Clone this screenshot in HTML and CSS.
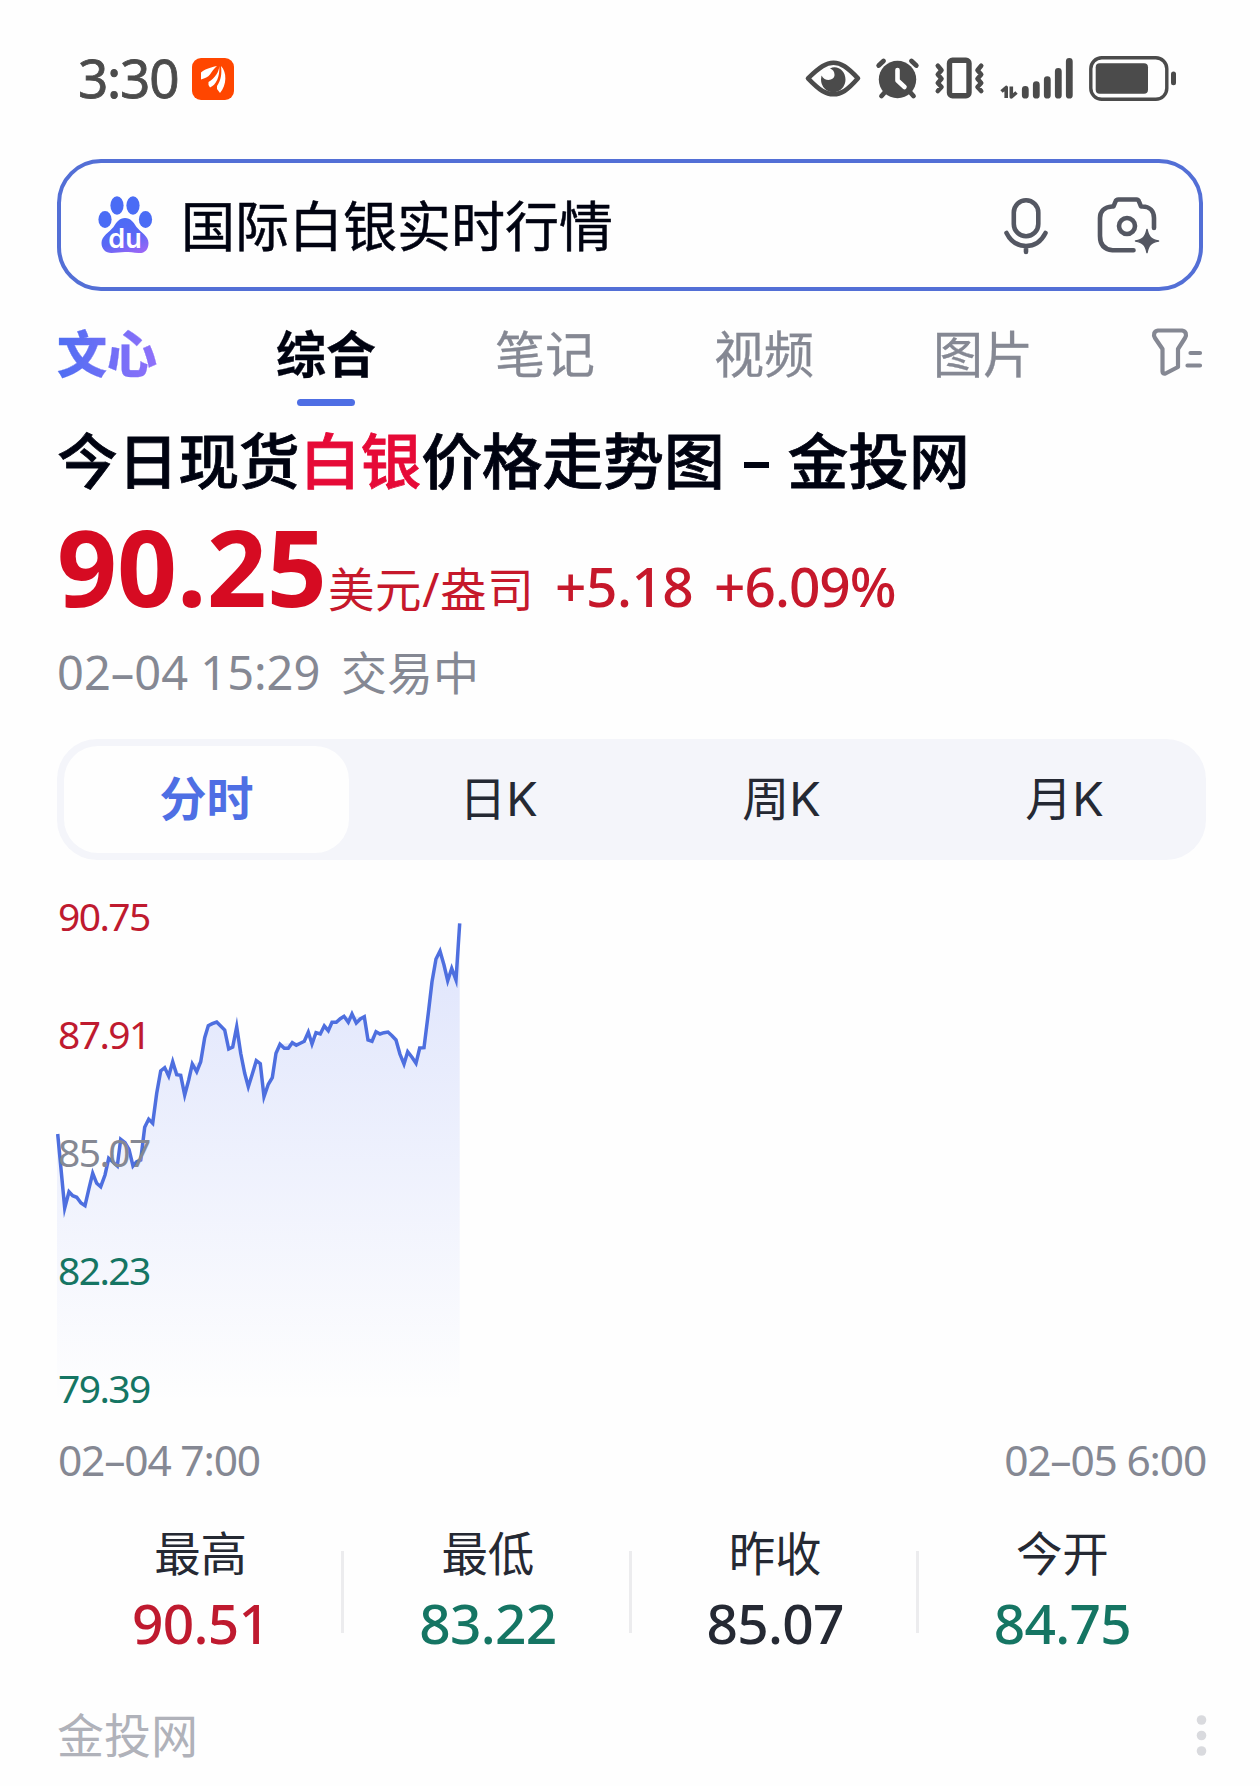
FILE: index.html
```html
<!DOCTYPE html>
<html lang="zh-CN">
<head>
<meta charset="utf-8">
<title>国际白银实时行情</title>
<link rel="stylesheet" href="styles.css">
</head>
<body>
<header class="status">
  <span class="clock num">3:30</span>
  <svg class="app-icon" width="42" height="42" viewBox="0 0 42 42">
    <rect width="42" height="42" rx="9" fill="#ff4600"/>
    <g fill="#fff">
      <path d="M25 8C18 9.500 12 11.500 9 14.500V21.500C13 20 16 19 18 16.500C20 13.500 22 10.500 25 8Z"/>
      <path d="M27.300 8C27 14 23 20 16.500 24V27L18 29.500C24 27 28 19 27.300 8Z"/>
      <path d="M29 8C30 16 29 22 25 28V31L28 35C35 27 35 14 29 8Z"/>
    </g>
  </svg>
  <svg class="status-icons" width="390" height="60" viewBox="0 0 390 60" fill="none" stroke="#4b4b4b" stroke-linecap="round" stroke-linejoin="round">
    <g transform="translate(10 1.500)">
      <path d="M8 27.800C20 16.300 26 12.300 33.500 12.300S47 16.300 58 27.800C47 40.300 41 43.800 33.500 43.800S20 40.300 8 27.800Z" stroke-width="4.600"/>
      <path d="M30 18C37 14 45.500 20 45.500 29A12 12.500 0 0 1 21 29L21.500 25C25 32 35 30 34.500 24C34.400 21 33 19 30 18Z" fill="#4b4b4b" stroke="none"/>
    </g>
    <circle cx="107.500" cy="30.500" r="18.700" fill="#4b4b4b" stroke="none"/>
    <path d="M88.700 16.500L93.500 12M126.300 16.500L121.500 12M96 42L91.500 47M119 42L123.500 47" stroke-width="4.800"/>
    <path d="M107.500 21V31.500L114.500 38" stroke="#fff" stroke-width="4.600"/>
    <rect x="159.500" y="11.300" width="19.500" height="35.500" rx="3" stroke-width="5.400"/>
    <path d="M147.800 16.800L151.500 21.300L147.800 25.500L151.500 29.700L147.800 34L151.500 38L147.800 42M191.200 16.800L187.500 21.300L191.200 25.500L187.500 29.700L191.200 34L187.500 38L191.200 42" stroke-width="4.600"/>
    <path d="M211.500 42.500L216.200 38.500V49M221.300 37.500V48L226.500 43.500" stroke-width="3.600" stroke-linecap="butt"/>
    <path d="M235.300 40.500V46.200M246.300 35.700V46.200M257.300 30.700V46.200M268.300 22.400V46.200M279.300 12.400V46.200" stroke-width="6.800"/>
    <rect x="300.800" y="8.800" width="76" height="41.500" rx="11" stroke-width="3.400"/>
    <rect x="305.700" y="14.300" width="52.300" height="30.500" rx="4" fill="#4b4b4b" stroke="none"/>
    <path d="M383.500 25V33.700" stroke-width="5"/>
  </svg>
</header>

<div class="search">
  <svg class="paw" width="56" height="58" viewBox="0 0 56 58">
    <defs><linearGradient id="paw" x1=".3" y1="0" x2=".8" y2="1"><stop offset="0" stop-color="#4a6cf5"/><stop offset=".55" stop-color="#5a68f5"/><stop offset="1" stop-color="#9a66f6"/></linearGradient></defs>
    <g fill="#4a6cf5">
      <ellipse cx="7" cy="23.500" rx="6.600" ry="8.500"/>
      <ellipse cx="19" cy="9.500" rx="6.600" ry="9.200"/>
      <ellipse cx="35" cy="9.500" rx="6.600" ry="9.200"/>
      <ellipse cx="47.500" cy="23.500" rx="6.600" ry="8.500"/>
    </g>
    <path d="M27 22C32.500 22 35.500 26 38.500 31C42.500 36 50.500 40 50.500 47C50.500 54 46.500 57.500 40.500 57C35.500 56.500 31.500 56 27 56S18.500 57 13.500 57C7.500 57 3.500 53 3.500 47C3.500 40 11.500 36 15.500 31C18.500 26 21.500 22 27 22Z" fill="url(#paw)"/>
    <text class="paw-text" x="27" y="51.500" text-anchor="middle">du</text>
  </svg>
  <span class="query">国际白银实时行情</span>
  <svg class="mic" width="46" height="60" viewBox="0 0 46 60" fill="none" stroke="#545762" stroke-width="4.600" stroke-linecap="round">
    <rect x="9.800" y="3.300" width="24.500" height="36" rx="12.250"/>
    <path d="M2.500 36C6.500 44 13.500 49 22 49S37.500 44 41.500 36M22 49V55"/>
  </svg>
  <svg class="camera" width="64" height="60" viewBox="0 0 64 60" fill="none" stroke="#545762" stroke-width="4.600" stroke-linecap="round" stroke-linejoin="round">
    <path d="M57 31V21C57 14 52.500 9.500 45.500 9.500H44L42 4.500C41.500 3 40.500 2.500 39.500 2.500H21.500C20 2.500 19 3 18.500 4.500L16.500 9.500H15C7.500 10 3 14.500 3 21V39C3 48 7.500 52.500 15.500 53.300H36.500"/>
    <circle cx="30" cy="29" r="8"/>
    <path d="M50 32.500C51.500 40 54 42.500 61.500 44C54 45.500 51.500 48 50 55.500C48.500 48 46 45.500 38.500 44C46 42.500 48.500 40 50 32.500Z" fill="#545762" stroke-width="1.500"/>
  </svg>
</div>

<nav class="tabs">
  <span class="tab tab-wenxin">文心</span>
  <span class="tab tab-active">综合</span>
  <span class="tab">笔记</span>
  <span class="tab">视频</span>
  <span class="tab">图片</span>
  <svg class="filter" width="52" height="50" viewBox="0 0 52 50" fill="none" stroke="#858893" stroke-width="4.200" stroke-linecap="round" stroke-linejoin="round">
    <path d="M6 3.500H30C34 4 35 8 33 11L26 22V40L13.500 46.500C11.500 47 10.500 46 10.500 44.500V22L3 11C1 8 2 4 6 3.500Z"/>
    <path d="M38.500 26H48M35.500 38.500H48"/>
  </svg>
</nav>

<h1 class="title">今日现货<em>白银</em>价格走势图<i class="dash"></i>金投网</h1>

<div class="price num">
  <span class="price-now">90.25</span>
  <span class="price-unit">美元/盎司</span>
  <span class="price-diff">+5.18</span>
  <span class="price-rate">+6.09%</span>
</div>
<div class="time"><span class="time-date num">02–04 15:29</span><span>交易中</span></div>

<div class="periods">
  <span class="period period-on">分时</span>
  <span class="period">日K</span>
  <span class="period">周K</span>
  <span class="period">月K</span>
</div>

<div class="chart">
  <svg class="chart-plot" width="1149" height="512" viewBox="57 897 1149 512">
    <defs>
      <linearGradient id="fill" gradientUnits="userSpaceOnUse" x1="0" y1="923" x2="0" y2="1403"><stop offset="0" stop-color="#4e6ef2" stop-opacity=".18"/><stop offset="1" stop-color="#4e6ef2" stop-opacity="0"/></linearGradient>
    </defs>
    <path fill="url(#fill)" d="M57 1134L57.700 1134L64.700 1208L69 1191.700L76.700 1197.300L85 1205.700L92.700 1173.300L100.700 1186.700L108.700 1158.300L117.300 1166L120.700 1139.300L129 1149.300L133 1166L140.700 1160L144.700 1127.300L152.700 1123.300L160.700 1071L168.700 1076L172.700 1061.700L180.700 1075.300L184.700 1095L192.300 1064L200.700 1061.700L208.300 1025.700L216.700 1022L224.700 1030L228.700 1049L232.700 1047L236.700 1026.700L248.300 1086.700L256.300 1060.700L260.300 1063.700L264 1096.700L272.300 1077.700L280 1044.300L304.300 1041.300L312 1044L332 1022.300L344 1016.300L364.300 1016.700L368 1040L376 1031.700L388 1032L396 1040L404 1064L407.700 1051.700L416 1063.300L419.700 1048L424 1047.700L432 981.700L440 951L447.700 980.700L451.700 968.300L456 980L459.700 923.300V1403H57Z"/>
    <path fill="none" stroke="#4e6fdf" stroke-width="3.500" stroke-miterlimit="10" d="M57.700 1134L64.700 1208L69 1191.700L72.700 1195.700L76.700 1197.300L81 1203L85 1205.700L89 1188.300L92.700 1173.300L96.700 1183.300L100.700 1186.700L105 1175L108.700 1158.300L112.700 1161.700L117.300 1166L120.700 1139.300L125 1142.700L129 1149.300L133 1166L136.700 1161.700L140.700 1160L144.700 1127.300L148.700 1119.300L152.700 1123.300L156.700 1093.300L160.700 1071L164.700 1067.700L168.700 1076L172.700 1061.700L176.700 1074.700L180.700 1075.300L184.700 1095L188.700 1080L192.300 1064L196.700 1071.700L200.700 1061.700L204.700 1037.700L208.300 1025.700L212.300 1023.700L216.700 1022L220.700 1026L224.700 1030L228.700 1049L232.700 1047L236.700 1026.700L240.700 1053.300L244.700 1073.300L248.300 1086.700L252.300 1074L256.300 1060.700L260.300 1063.700L264 1096.700L268.300 1084.300L272.300 1077.700L276 1053.300L280 1044.300L284.300 1048.300L288.300 1048.300L292.300 1042.700L296.300 1045.300L300.300 1043.300L304.300 1041.300L308.300 1032.300L312 1044L316 1032.700L320.300 1034L324.300 1026L328.300 1030.700L332 1022.300L336.300 1022.300L340.300 1018.700L344 1016.300L348.300 1022.300L352 1014L356.300 1023L360.300 1019L364.300 1016.700L368 1040L372 1041.300L376 1031.700L380 1034L384 1032.700L388 1032L392 1035.700L396 1040L400 1054.300L404 1064L407.700 1051.700L412 1057.300L416 1063.300L419.700 1048L424 1047.700L428.300 1013.300L432 981.700L436 959L440 951L444 965L447.700 980.700L451.700 968.300L456 980L459.700 923.300"/>
  </svg>
  <div class="scale num">
    <span class="up">90.75</span>
    <span class="up">87.91</span>
    <span class="flat">85.07</span>
    <span class="down">82.23</span>
    <span class="down">79.39</span>
  </div>
</div>
<div class="axis num"><span>02–04 7:00</span><span>02–05 6:00</span></div>

<div class="stats">
  <div class="stat"><span class="stat-name">最高</span><b class="stat-value num up">90.51</b></div>
  <div class="stat"><span class="stat-name">最低</span><b class="stat-value num down">83.22</b></div>
  <div class="stat"><span class="stat-name">昨收</span><b class="stat-value num">85.07</b></div>
  <div class="stat"><span class="stat-name">今开</span><b class="stat-value num down">84.75</b></div>
</div>

<footer class="source">
  <span>金投网</span>
  <svg width="12" height="44" viewBox="0 0 12 44" fill="#d9dade"><circle cx="7.500" cy="6" r="4.800"/><circle cx="7.500" cy="21.500" r="4.800"/><circle cx="7.500" cy="37" r="4.800"/></svg>
</footer>
</body>
</html>
```
FILE: styles.css
```css
* { box-sizing: border-box; }
body {
  margin: 0;
  width: 1260px;
  height: 1786px;
  overflow: hidden;
  padding: 0 54px 0 57px;
  background: #fefefe;
  color: #252933;
  font-family: Inter, "Noto Sans CJK SC", sans-serif;
}
.num { font-family: "Noto Sans", "Noto Sans CJK SC", sans-serif; }
svg { display: block; flex: none; overflow: visible; }
span { white-space: nowrap; }

.status { display: flex; align-items: center; height: 159px; padding-left: 21px; }
.clock { width: 114px; padding-bottom: 3px; color: #4b4b4b; font-size: 53px; line-height: 60px; letter-spacing: -1.2px; -webkit-text-stroke: .8px; }
.app-icon { margin-top: -1px; }
.status-icons { margin-left: 556px; margin-top: -2px; }

.search { display: flex; align-items: center; width: 1146px; height: 132px; padding: 0 38px 0 37px; border: 4px solid #536fd6; border-radius: 44px; }
.paw-text { fill: #fff; font-size: 27px; font-weight: 600; }
.query { flex: 1; margin-left: 27px; padding-top: 6px; color: #000311; font-size: 54px; line-height: 64px; -webkit-text-stroke: .5px; }
.mic { margin-top: 3px; margin-right: 47px; }
.camera { margin-top: 3px; }

.tabs { display: flex; align-items: center; gap: 119px; height: 122px; }
.tab { position: relative; width: 100px; padding-top: 5px; color: #858893; font-size: 50px; line-height: 60px; -webkit-text-stroke: .3px; }
.tab-wenxin { font-weight: 900; background: linear-gradient(90deg, #4e6ef2, #8f70fa); background-clip: text; color: transparent; }
.tab-active { color: #000311; font-weight: 700; }
.tab-active::after { content: ""; position: absolute; left: 21px; top: 79px; width: 58px; height: 7px; border-radius: 4px; background: #4e6ee4; }

.title { height: 90px; margin: 0; padding-top: 4px; color: #000311; font-size: 60.700px; font-weight: 500; line-height: 90px; white-space: nowrap; -webkit-text-stroke: .8px; }
.title em { color: #e60a37; font-style: normal; }
.dash { display: inline-block; width: 25px; height: 6px; margin: 0 19px; background: #000311; vertical-align: 16px; }

.price { display: flex; align-items: baseline; height: 133px; line-height: 127px; color: #c6182b; }
.price-now { width: 271px; color: #d60b22; font-size: 105px; font-weight: 700; }
.price-unit { width: 227px; font-size: 46.500px; letter-spacing: .6px; }
.price-diff { width: 159px; font-size: 55px; font-weight: 500; letter-spacing: -.5px; }
.price-rate { font-size: 55px; font-weight: 500; letter-spacing: -1px; }

.time { display: flex; height: 74px; color: #858893; font-size: 46px; line-height: 74px; }
.time-date { width: 284px; margin-top: -1px; font-size: 47px; }

.periods { display: grid; grid-template-columns: 293px 1fr 1fr 1fr; margin-top: 29px; padding: 7px 0 7px 7px; height: 121px; border-radius: 40px; background: #f4f5fa; }
.period { font-size: 47px; line-height: 105px; text-align: center; }
.period-on { margin-right: 8px; border-radius: 34px; background: #fefefe; color: #4e6fe4; font-weight: 700; }

.chart { display: grid; height: 512px; margin-top: 37px; }
.chart-plot, .scale { grid-area: 1 / 1; }
.scale { display: flex; flex-direction: column; justify-content: space-between; z-index: 1; margin: -1px 0 1px 1px; font-size: 39px; line-height: 40px; letter-spacing: -1.6px; }
.up { color: #bf1a2f; }
.down { color: #157563; }
.flat { color: #858893; }
.axis { display: flex; justify-content: space-between; height: 102px; padding-left: 1px; color: #858893; font-size: 42.500px; line-height: 101px; letter-spacing: -1.2px; }

.stats { display: grid; grid-template-columns: repeat(4, 1fr); height: 141px; }
.stat { position: relative; display: flex; flex-direction: column; align-items: center; }
.stat + .stat::before { content: ""; position: absolute; left: -3px; top: 40px; width: 3px; height: 82px; background: #ececee; }
.stat-name { height: 82px; padding-top: 2px; font-size: 46.500px; line-height: 82px; }
.stat-value { font-size: 55px; font-weight: 500; line-height: 59px; letter-spacing: -.7px; }

.source { display: flex; align-items: center; justify-content: space-between; height: 68px; margin-top: 50px; color: #b0b2ba; font-size: 47px; line-height: 70px; }
```
